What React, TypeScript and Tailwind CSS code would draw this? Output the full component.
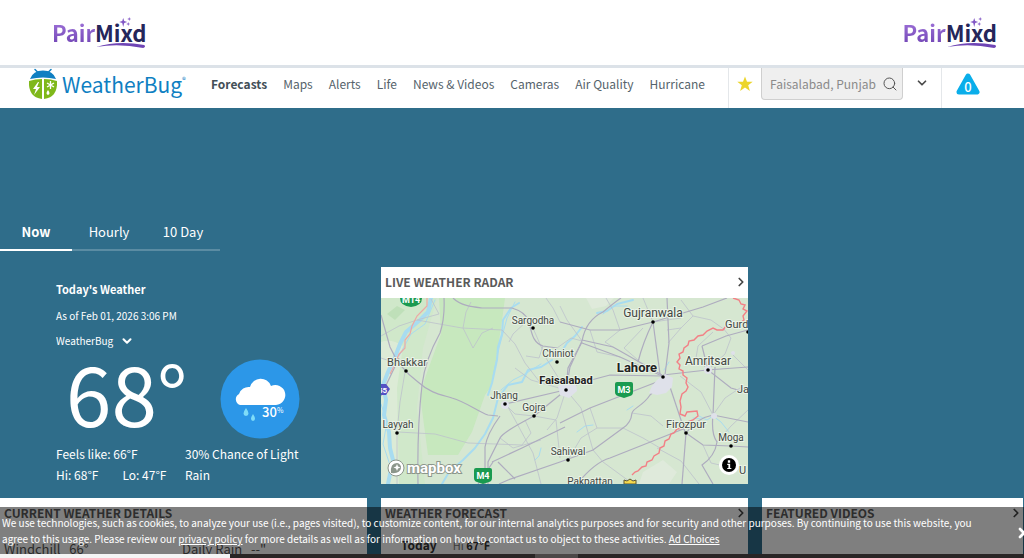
import { useState } from "react"
import { ChevronDown, ChevronRight, Search, X } from "lucide-react"

const navLinks = ["Forecasts", "Maps", "Alerts", "Life", "News & Videos", "Cameras", "Air Quality", "Hurricane"]
const tabs = ["Now", "Hourly", "10 Day"]

// x / y is the text anchor, dx / dy is the dot
const cities = [
    { name: "Sargodha", x: 152, y: 26, dx: 152, dy: 30, size: 10 },
    { name: "Bhakkar", x: 26, y: 68, dx: 25, dy: 73, size: 11 },
    { name: "Chiniot", x: 177, y: 59, dx: 176, dy: 64, size: 10 },
    { name: "Jhang", x: 123, y: 101, dx: 124, dy: 106, size: 10 },
    { name: "Gojra", x: 153, y: 113, dx: 153, dy: 118, size: 10 },
    { name: "Layyah", x: 17, y: 130, dx: 16, dy: 135, size: 10 },
    { name: "Sahiwal", x: 187, y: 157, dx: 187, dy: 162, size: 10 },
    { name: "Gujranwala", x: 272, y: 19, dx: 272, dy: 24, size: 12 },
    { name: "Amritsar", x: 327, y: 67, dx: 327, dy: 72, size: 12 },
    { name: "Firozpur", x: 305, y: 130, dx: 305, dy: 135, size: 11 },
    { name: "Moga", x: 350, y: 143, dx: 350, dy: 148, size: 10 },
]

const roads = [
    "M0 17 L9 49 Q18 70 37 84 C50 96 62 97 71 100 C85 104 98 114 107 117 L117 118",
    "M63 0 Q64 20 59 35 Q44 62 41 87 Q36 130 37 186",
    "M72 0 C80 8 92 9 101 10 L131 10 Q144 14 147 22 C151 32 150 44 162 48 L176 50",
    "M179 24 L209 32 H239 L272 24 L322 9 L346 0",
    "M272 24 L279 76",
    "M286 0 L288 45 L284 77",
    "M272 24 Q262 44 257 64",
    "M201 42 L232 49 Q262 66 281 77",
    "M201 45 L239 59 L281 78",
    "M201 43 Q205 22 222 14 Q234 4 240 0",
    "M201 43 L189 69 L185 92",
    "M282 77 L326 72 L367 69",
    "M281 78 L229 77 L199 85 L185 92",
    "M282 80 Q278 90 269 97 C262 108 252 110 251 115 Q250 125 242 130 L212 152 L179 164 L127 182 L118 186",
    "M179 125 L209 110 L250 94 L281 82",
    "M196 186 Q214 164 229 160 L292 135 L305 130",
    "M286 80 L304 134",
    "M305 135 L322 147 L350 148 L367 149",
    "M305 135 L301 186",
    "M305 135 Q316 120 332 117 L367 124",
    "M334 69 L332 117 Q330 136 336 144 Q334 158 321 167 L332 186",
    "M153 118 Q122 134 119 140 L107 164 V186",
    "M153 118 L185 92",
    "M124 106 L184 92",
    "M119 118 Q106 136 104 149 V186",
    "M184 129 L141 150 L111 164",
    "M321 48 L327 72 L350 90 L367 95",
    "M321 48 L345 38 L367 32",
    "M185 92 L187 70 L201 44",
    "M0 98 L18 60",
    "M97 186 L112 164",
    "M117 164 L134 181",
]

const minorRoads = [
    "M36 22 L81 30 L121 32 L134 46 L144 65 L161 87",
    "M82 30 L92 50 L101 35 L112 30",
    "M82 30 L85 14 L90 4",
    "M17 134 L54 136 L87 145 L141 147",
    "M16 134 L19 104 L24 74",
    "M16 135 V186",
    "M127 109 L152 155 L160 186",
    "M147 22 L132 36 L128 44",
    "M162 48 L158 60 L145 58",
    "M152 30 L165 60 L185 92",
    "M209 32 L216 54 L239 59",
    "M239 32 L224 44 L232 49",
    "M257 62 L243 50 L262 30",
    "M286 32 L300 30 L312 18 L330 22 L344 32",
    "M287 45 L300 30",
    "M300 2 L312 18",
    "M185 92 L200 110 L212 152",
    "M185 92 L176 120 L166 132",
    "M153 118 L175 122 L179 160",
    "M209 110 L216 130 L242 130",
    "M216 130 L200 140 L187 162",
    "M251 115 L270 118 L282 128",
    "M242 130 L262 140 L279 150",
    "M276 150 L300 163 L318 186",
    "M212 152 L222 164 L252 186",
    "M336 144 L350 128 L367 112",
    "M322 147 L330 165 L352 170",
    "M332 117 L344 100 L362 88",
    "M299 78 L320 94 L332 117",
    "M327 72 L315 60 L317 48 L332 34",
    "M327 72 L344 56 L350 40 L342 30",
    "M350 55 L367 72",
    "M50 1 L58 16 L36 22",
    "M0 38 L18 28 L36 22",
    "M0 60 L12 64 L24 50",
    "M141 147 L150 135 L144 122",
    "M119 140 L132 150 L160 142",
    "M176 50 L190 40 L201 43",
    "M179 8 L186 22 L201 43",
    "M165 0 L172 10 L179 24",
    "M124 106 L134 116 L153 118",
    "M185 92 L150 82 L134 70",
    "M225 0 L232 12 L239 32",
    "M262 0 L272 24 L300 20",
]

const rivers = [
    "M50 0 L47 14 L39 22 L25 34 L19 46 L14 59 L7 74 L2 87 L5 102 L3 117 L8 134 L9 150 L12 162 L7 186",
    "M138 5 L130 10 L122 22 L121 36 L117 49 L116 62 L111 85 L107 97",
    "M171 62 L160 69 L147 72 L141 84 L127 87 L117 100 L112 120 L104 136 L94 150 L82 162 L68 174 L61 186",
    "M252 2 L236 6 L226 13 L216 15",
    "M201 29 L194 38 L186 45 L178 58",
]

const streams = [
    "M54 2 L44 26 L30 36 L18 58",
    "M134 4 L126 20 L118 50 L112 78",
    "M160 66 L144 76 L132 82 L120 92",
    "M246 8 L232 8 L222 16",
    "M288 64 L283 72",
    "M0 106 L6 124 L2 146 L10 170",
    "M196 134 L204 128 L212 127",
    "M246 112 L252 108",
    "M318 118 L326 122 L332 118 L340 124 L348 134",
    "M312 120 L320 121",
    "M154 162 L158 158 L160 150",
]

function Shield({ x, y, label }: { x: number; y: number; label: string }) {
    return (
        <g>
            <path d={`M${x + 2} ${y} h14 q2 0 2 2 v8 q0 3 -3 4 l-6 2 l-6 -2 q-3 -1 -3 -4 v-8 q0 -2 2 -2z`} fill="#1a9a50" />
            <text x={x + 9} y={y + 11} textAnchor="middle" fontSize="9" fontWeight="700" fill="#fff">{label}</text>
        </g>
    )
}

function RadarMap() {
    return (
        <svg viewBox="0 0 367 186" preserveAspectRatio="xMidYMid slice" className="block h-[186px] w-full font-['Roboto','Liberation_Sans',sans-serif]" role="img" aria-label="Radar map">
            <rect width="367" height="186" fill="#d6e7d1" />
            <path d="M0 0H56L42 50L36 110L44 186H0Z" fill="#d0e8ca" />
            <path d="M0 44Q10 40 22 48L16 90L18 186H0Z" fill="#dcebd6" />
            <path d="M58 0H124L120 30L111 87L104 97L91 134L77 157H47L39 97L44 80L60 36Z" fill="#c7e8be" />
            <path d="M205 0h28l-8 8l-14 3z M262 174l20 -12l14 12l-8 12h-30z" fill="#dfeadb" />
            <path d="M6 16L16 8L24 12L14 22Z" fill="#bfe0b9" />
            <g fill="none" stroke="#a8dcf0" strokeLinejoin="round" strokeLinecap="round">
                {streams.map((d) => <path key={d} d={d} strokeWidth="1" />)}
                {rivers.map((d, i) => <path key={d} d={d} strokeWidth={i === 0 ? 4 : 2} />)}
            </g>
            <g fill="none" stroke="#bdc2cb" strokeWidth="0.8">
                {minorRoads.map((d) => <path key={d} d={d} />)}
            </g>
            <g fill="none" stroke="#aeacbf" strokeWidth="1.2">
                {roads.map((d) => <path key={d} d={d} />)}
            </g>
            <g fill="#dfe1ea">
                <path d="M276 82l8 -6l8 4l-1 9l-6 6l-9 2l-8 -2l3 -7z" />
                <path d="M177 88l8 -6l10 3l1 8l-8 7l-9 -3z" />
                <circle cx="124" cy="107" r="4" />
                <circle cx="327" cy="72" r="4" />
                <circle cx="333" cy="118" r="3" />
                <circle cx="352" cy="55" r="2" />
            </g>
            <path d="M46 0l0 8l-4 4l-6 6l-5 10l-2 8l-5 6l0 8l-6 6l-4 10l-5 10" fill="none" stroke="#eda9a5" strokeWidth="1.2" />
            <path
                d="M352 0L358 2L360 6L364 7L362 11L366 13L362 18L363 22L359 25L356 28L350 29l-5 -1l-3 4l-6 0l-4 -2l-6 3l-4 4l-5 1l-4 4l-5 1l-1 4l-4 3l-1 4l-4 2l1 4l-3 4l3 3l-1 4l4 2l0 4l4 3l-1 5l2 4l-2 4l-4 3l-2 7l1 6l-1 7l5 2l2 -4l10 -1l1 5l-5 4l-6 2l-4 6l-6 1l-3 4l-3 1l-2 5l-4 2l-1 5l-4 2l-1 5l-5 3l-2 4l-5 2l-1 4l-4 1l-4 4l-3 1l-3 3"
                fill="none"
                stroke="#f28086"
                strokeWidth="1.4"
            />
            <g fontSize="11" fill="#434743" stroke="#eaf3e7" strokeWidth="2" paintOrder="stroke" textAnchor="middle">
                {cities.map((c) => <text key={c.name} x={c.x} y={c.y} fontSize={c.size}>{c.name}</text>)}
                <text x="209" y="187" fontSize="10">Pakpattan</text>
                <text x="344" y="30" textAnchor="start">Gurdaspur</text>
                <text x="356" y="95" textAnchor="start">Jalandhar</text>
                <text x="358" y="176" textAnchor="start">U</text>
                <text x="185" y="86" fontWeight="700" fill="#222">Faisalabad</text>
                <text x="256" y="74" fontSize="13" fontWeight="700" fill="#222">Lahore</text>
            </g>
            <g fill="#000">
                {cities.map((c) => <circle key={c.name} cx={c.dx} cy={c.dy} r="1.8" />)}
                <circle cx="185" cy="92" r="1.8" />
                <circle cx="282" cy="79" r="1.8" />
                <circle cx="367" cy="34" r="1.8" />
            </g>
            <Shield x={234} y={84} label="M3" />
            <Shield x={93} y={170} label="M4" />
            <path d="M19 0h22q0 8 -11 9q-11 -1 -11 -9z" fill="#1a9a50" />
            <text x="30" y="5" textAnchor="middle" fontSize="9" fontWeight="700" fill="#fff">M14</text>
            <path d="M0 86h5l4 5l-4 6h-5z" fill="#5451c4" />
            <text x="-3" y="95" fontSize="8" fontWeight="700" fill="#fff">55</text>
            <path d="M243 186v-4l3 1l3 -2l3 2l3 -1v4z" fill="#f5d94d" stroke="#5c5636" />
            {/* mapbox wordmark */}
            <circle cx="15" cy="170" r="8" fill="#fff" stroke="#8c968b" />
            <path d="M10 175q-1 -10 6 -10a4.500 4.500 0 0 1 4 5q-1 6 -10 5z" fill="#8c968b" />
            <path d="M16 166l1 2.500l2.500 1l-2.500 1l-1 2.500l-1 -2.500l-2.500 -1l2.500 -1z" fill="#fff" />
            <text x="26" y="175" fontSize="15" fontWeight="700" fill="#fff" stroke="#8c968b" strokeWidth="2" paintOrder="stroke">mapbox</text>
        </svg>
    )
}

function PairMixd() {
    return (
        <a href="#" className="relative block text-[22px] leading-8 font-bold text-[#25265a]">
            <span className="bg-gradient-to-b from-[#a97be0] to-[#6c3fb0] bg-clip-text text-transparent">Pair</span>Mixd
            <svg viewBox="0 0 94 32" className="absolute inset-0 h-full w-full" aria-hidden="true">
                <path d="M44 31Q66 24 92 29Q94 31 91 32Q66 27 44 31Z" fill="#6f45b5" />
                <path d="M71 2l1 3l3 1l-3 1l-1 4l-1 -4l-3 -1l3 -1z M77 1l0.500 1.500l1.500 0.500l-1.500 0.500l-0.500 1.500l-0.500 -1.500l-1.500 -0.500l1.500 -0.500z M76 6l0.500 1.500l1.500 0.500l-1.500 0.500l-0.500 1.500l-0.500 -1.500l-1.500 -0.500l1.500 -0.500z" fill="#8257c5" />
            </svg>
        </a>
    )
}

function BugIcon() {
    return (
        <svg viewBox="0 0 30 32" className="h-8 w-[30px]" aria-hidden="true">
            <path d="M7 1.500l4 4M23 1.500l-4 4" stroke="#0f7fc2" strokeWidth="1.500" strokeLinecap="round" />
            <path d="M2 11Q5 2.500 15 2.500T28 11Q15 8 2 11Z" fill="#0f7fc2" />
            <path d="M1 13Q7 11 14 11V31Q0 29 1 13Z" fill="#7fb81a" />
            <path d="M29 13Q23 11 16 11V31Q30 29 29 13Z" fill="#7fb81a" />
            <path d="M10 14l-5 7h3l-2 6l6 -8h-3l2 -5z" fill="#fff" />
            <path d="M22.500 13v8M19 15l7 4M26 15l-7 4" stroke="#fff" strokeWidth="1.300" />
            <path d="M20 22q-3 4 0 5q3 -1 0 -5z" fill="#fff" />
        </svg>
    )
}

function CardHeader({ title, arrow = true }: { title: string; arrow?: boolean }) {
    return (
        <div className="flex h-[31px] items-center justify-between pb-px pl-1">
            <h2 className="text-[12px] leading-5 font-bold text-[#5a5a5a]">{title}</h2>
            {arrow && (
                <button aria-label={`Open ${title}`}>
                    <ChevronRight className="size-3.5 text-[#444]" strokeWidth={3} />
                </button>
            )}
        </div>
    )
}

export default function App() {
    const [activeTab, setActiveTab] = useState("Now")
    const [location, setLocation] = useState("Faisalabad, Punjab")
    const [showNotice, setShowNotice] = useState(true)

    return (
        <div className="relative flex h-screen flex-col overflow-hidden bg-[#2f6d8a] font-['Noto_Sans_CJK_SC','Open_Sans',sans-serif]">
            <div className="flex h-[65px] shrink-0 items-center justify-between bg-white pr-[27px] pb-0.5 pl-[52px]">
                <PairMixd />
                <PairMixd />
            </div>

            <header className="flex h-[43px] shrink-0 border-t-3 border-[#dce2e8] bg-white">
                <a href="#" className="flex w-[187px] shrink-0 items-start pl-7" aria-label="WeatherBug home">
                    <BugIcon />
                    <span className="ml-1 text-[21px] leading-8 text-[#0f7fc2]">WeatherBug</span>
                    <span className="mt-1.5 text-[8px] leading-3 text-[#0f7fc2]">®</span>
                </a>
                <nav className="ml-6 flex flex-1 gap-4 pt-1.5 text-[12px] leading-5 text-[#55636b]">
                    {navLinks.map((link) => (
                        <a key={link} href="#" className={link === "Forecasts" ? "font-bold whitespace-nowrap text-[#434f57]" : "whitespace-nowrap"}>
                            {link}
                        </a>
                    ))}
                </nav>
                <div className="flex shrink-0 border-l border-[#e4e7ea] pl-2">
                    <button aria-label="Favorite location" className="mt-2 size-4">
                        <svg viewBox="0 0 16 16" className="size-4">
                            <path d="M8 0.500l2 5.300h5.700l-4.500 3.500l1.700 5.700l-4.900 -3.400l-4.900 3.400l1.700 -5.700l-4.500 -3.500h5.700z" fill="#ecd52b" />
                        </svg>
                    </button>
                    <label className="ml-2 flex h-8 w-[142px] items-center rounded-b-sm border border-t-0 border-[#cfcfcf] bg-[#efefef] pr-1 pl-2">
                        <input
                            value={location}
                            onChange={(e) => setLocation(e.target.value)}
                            aria-label="Location"
                            className="w-full min-w-0 bg-transparent text-[12px] leading-5 text-[#8a8a8a] outline-none"
                        />
                        <Search className="size-4 shrink-0 text-[#555]" strokeWidth={1.5} />
                    </label>
                    <button aria-label="Show locations" className="mt-2 ml-3 size-3.5">
                        <ChevronDown className="size-3.5 text-[#4a4a4a]" strokeWidth={3} />
                    </button>
                    <button aria-label="Alerts" className="ml-3 flex w-[83px] border-l border-[#e4e7ea] pt-1 pl-[13px]">
                        <svg viewBox="0 0 26 24" className="h-6 w-[26px]">
                            <path d="M13 4L22 20H4Z" fill="#0aaeea" stroke="#0aaeea" strokeWidth="5" strokeLinejoin="round" />
                            <text x="13" y="20" textAnchor="middle" fontSize="13" fontWeight="500" fill="#fff">0</text>
                        </svg>
                    </button>
                </div>
            </header>

            <div className="flex h-[143px] shrink-0 items-end">
                {tabs.map((tab) => (
                    <button
                        key={tab}
                        onClick={() => setActiveTab(tab)}
                        className={
                            tab === activeTab
                                ? "w-[72px] border-b-2 border-white pb-[7px] text-[13px] leading-5 font-bold text-white"
                                : "w-[74px] border-b-2 border-[#5b8ca3] pb-[7px] text-[13px] leading-5 text-white"
                        }
                    >
                        {tab}
                    </button>
                ))}
            </div>

            <main className="mt-4 grid min-h-0 flex-1 grid-cols-[367fr_367fr_261fr] grid-rows-[217px_1fr] gap-3.5 pr-px">
                <section className="pt-3 pl-14 text-white">
                    <h1 className="text-[11px] leading-5 font-bold">Today's Weather</h1>
                    <p className="mt-2 text-[10px] leading-[18px]">As of Feb 01, 2026 3:06 PM</p>
                    <label className="mt-1.5 flex items-center text-[10px] leading-5">
                        <select aria-label="Data source" className="w-16 appearance-none bg-transparent outline-none">
                            <option>WeatherBug</option>
                        </select>
                        <ChevronDown className="size-3.5" strokeWidth={3.5} />
                    </label>
                    <div className="mt-2 flex h-20 items-start">
                        <span className="w-[164px] pl-2.5 text-[82px] leading-[66px]">68°</span>
                        <svg viewBox="0 0 80 80" className="size-20 shrink-0" role="img" aria-label="Light rain, 30%">
                            <circle cx="40" cy="40" r="39.500" fill="#2c97e8" />
                            <path d="M20 46a6 6 0 0 1 -1 -11a10 10 0 0 1 11 -7a11 11 0 0 1 21 -1a10 10 0 1 1 5 19z" fill="#fff" />
                            <path d="M26 49q-5 7 0 8q5 -1 0 -8z M33 55q-4 6 0 7q4 -1 0 -7z" fill="#7fdcf8" />
                            <text x="42" y="58" fontSize="13" fontWeight="500" fill="#fff">30</text>
                            <text x="57" y="54" fontSize="7" fill="#fff">%</text>
                        </svg>
                    </div>
                    <div className="mt-1 flex text-[12px] leading-[21px]">
                        <div className="w-[129px]">
                            <p>Feels like: 66°F</p>
                            <p className="flex gap-6">
                                <span>Hi: 68°F</span>
                                <span>Lo: 47°F</span>
                            </p>
                        </div>
                        <p className="w-[130px]">30% Chance of Light Rain</p>
                    </div>
                </section>

                <section className="bg-white">
                    <CardHeader title="LIVE WEATHER RADAR" />
                    <div className="relative">
                        <RadarMap />
                        <button aria-label="Map information" className="absolute right-[9px] bottom-[9px] flex size-5 items-center justify-center rounded-full bg-white">
                            <svg viewBox="0 0 12 12" className="size-3.5">
                                <circle cx="6" cy="6" r="6" fill="#000" />
                                <path d="M5 2h2v2H5z M4.500 5h2.500v3.500h1v1h-3.500v-1h1v-2.500h-1z" fill="#fff" />
                            </svg>
                        </button>
                    </div>
                </section>

                <div />

                <section className="overflow-hidden bg-white">
                    <CardHeader title="CURRENT WEATHER DETAILS" arrow={false} />
                    <div className="mt-2.5 flex pl-1 text-[13px] leading-5 text-[#555]">
                        <span className="w-[178px]">Windchill &nbsp; 66°</span>
                        <span>Daily Rain &nbsp; --"</span>
                    </div>
                </section>

                <section className="overflow-hidden bg-white">
                    <CardHeader title="WEATHER FORECAST" />
                    <div className="mt-1.5 flex gap-4 pl-5 text-[12px] leading-5 font-bold text-[#333]">
                        <span>Today</span>
                        <span className="text-[11px]"><span className="font-normal text-[#777]">Hi</span> 67°F</span>
                    </div>
                </section>

                <section className="overflow-hidden bg-white">
                    <CardHeader title="FEATURED VIDEOS" />
                </section>
            </main>

            {showNotice && (
                <div className="absolute inset-x-0 bottom-1 bg-black/50 pt-2 pr-8 pb-[7px] pl-0.5 text-white">
                    <p className="text-[10px] leading-4">
                        We use technologies, such as cookies, to analyze your use (i.e., pages visited), to customize content, for our internal
                        analytics purposes and for security and other purposes. By continuing to use this website, you agree to this usage. Please
                        review our <a href="#" className="underline">privacy policy</a> for more details as well as for information on how to
                        contact us to object to these activities. <a href="#" className="underline">Ad Choices</a>
                    </p>
                    <button onClick={() => setShowNotice(false)} aria-label="Close" className="absolute top-[18px] -right-2">
                        <X className="size-4" strokeWidth={4} />
                    </button>
                </div>
            )}

            {/* top edge of the video docked under the notice */}
            <div className="absolute inset-x-0 bottom-0 flex h-1 bg-[#292525]">
                <div className="w-[230px] bg-[#f4f4f4]" />
                <div className="ml-[305px] w-[43px] bg-[#4c4848]" />
            </div>
        </div>
    )
}
